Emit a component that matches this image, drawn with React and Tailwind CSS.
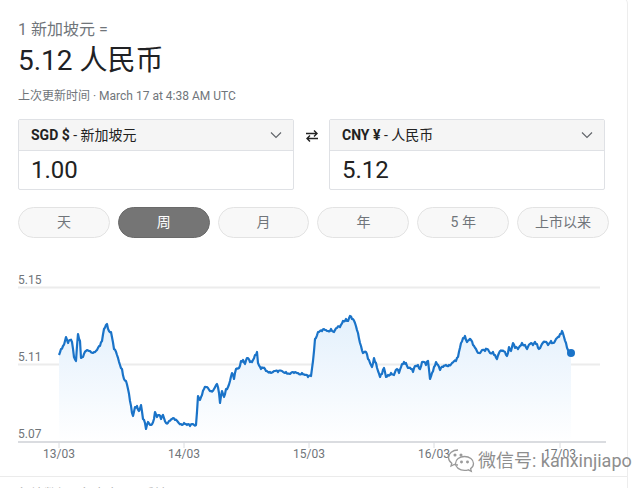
import React from 'react';

const FONT = { fontFamily: 'Roboto, "Noto Sans CJK SC", sans-serif' };

// rough trace of the rate line, page coordinates
const KEY = [
  [59, 354], [61, 348], [63, 345], [65, 340], [66, 336], [68, 342], [70, 339], [72, 341],
  [74, 356], [76, 360], [77, 345], [78, 333], [80, 340], [81, 357], [83, 356], [86, 350],
  [90, 350], [94, 351], [97, 349], [100, 345], [102, 340], [104, 328], [106, 324], [107, 323],
  [109, 330], [111, 331], [114, 348], [117, 354], [120, 364], [122, 368], [124, 378],
  [126, 380], [128, 388], [130, 400], [132, 412], [133, 415], [135, 406], [137, 405],
  [139, 410], [141, 404], [143, 418], [145, 422], [146, 428], [148, 421], [151, 424],
  [154, 418], [155, 411], [157, 416], [159, 414], [161, 418], [163, 414], [166, 422],
  [169, 420], [172, 418], [175, 419], [178, 421], [181, 423], [184, 422], [187, 424],
  [190, 425], [193, 423], [196, 424], [198, 395], [200, 399], [202, 394], [204, 388],
  [206, 386], [208, 387], [211, 390], [214, 388], [217, 383], [219, 392], [220, 402],
  [222, 390], [224, 396], [226, 388], [228, 386], [230, 380], [232, 372], [234, 378],
  [236, 368], [239, 367], [241, 360], [243, 359], [245, 363], [247, 357], [250, 361],
  [252, 361], [255, 354], [257, 351], [258, 362], [261, 368], [263, 367], [266, 370],
  [270, 371], [274, 370], [278, 371], [282, 370], [286, 371], [290, 373], [294, 372],
  [298, 372], [302, 372], [305, 374], [308, 376], [311, 375], [313, 360], [315, 338],
  [318, 331], [322, 330], [325, 329], [328, 330], [331, 328], [334, 331], [337, 327],
  [340, 326], [343, 320], [346, 318], [348, 320], [350, 315], [352, 318], [355, 322],
  [358, 332], [361, 345], [363, 352], [366, 351], [368, 358], [370, 362], [372, 366],
  [374, 357], [376, 362], [378, 370], [380, 376], [382, 373], [384, 367], [386, 376],
  [388, 374], [391, 372], [394, 374], [397, 368], [399, 372], [402, 363], [404, 361],
  [406, 362], [408, 367], [411, 368], [413, 371], [415, 365], [418, 364], [420, 368],
  [422, 361], [424, 361], [426, 364], [428, 360], [430, 378], [432, 372], [434, 366],
  [436, 361], [438, 364], [440, 369], [443, 366], [446, 364], [449, 364], [452, 362],
  [456, 360], [458, 356], [461, 342], [463, 337], [465, 335], [467, 341], [469, 339],
  [471, 339], [473, 344], [476, 348], [479, 352], [482, 349], [485, 350], [487, 348],
  [490, 352], [493, 351], [495, 354], [497, 358], [499, 352], [502, 350], [505, 351],
  [507, 355], [509, 346], [511, 350], [513, 342], [515, 347], [518, 348], [520, 345],
  [522, 342], [525, 344], [527, 348], [530, 343], [533, 344], [535, 341], [537, 343],
  [539, 348], [542, 343], [545, 341], [548, 344], [551, 340], [553, 342], [556, 338],
  [559, 336], [561, 333], [562, 330], [564, 336], [566, 342], [568, 349], [571, 352],
];

function buildLine() {
  const pts = [];
  for (let i = 0; i < KEY.length - 1; i++) {
    const [x0, y0] = KEY[i];
    const [x1, y1] = KEY[i + 1];
    const steps = Math.max(1, Math.round((x1 - x0) / 1));
    for (let s = 0; s < steps; s++) {
      const t = s / steps;
      const x = x0 + (x1 - x0) * t;
      const j = s === 0 ? 0 : Math.sin(x * 12.9898) * 1.3;
      pts.push([x, y0 + (y1 - y0) * t + j]);
    }
  }
  pts.push(KEY[KEY.length - 1]);
  return pts;
}

const LINE = buildLine();
const LINE_D = LINE.map((p, i) => `${i ? 'L' : 'M'}${p[0].toFixed(1)} ${p[1].toFixed(1)}`).join(' ');
const AREA_D = `${LINE_D} L571 441 L59 441 Z`;

const RANGES = ['天', '周', '月', '年', '5 年', '上市以来'];
const X_LABELS = [['13/03', 59], ['14/03', 184], ['15/03', 309], ['16/03', 434], ['17/03', 560]];

function Chevron() {
  return (
    <svg width="14" height="14" viewBox="0 0 14 14" fill="none" stroke="#5f6368" strokeWidth="1.1">
      <path d="M2 4.5 L7 9.5 L12 4.5" />
    </svg>
  );
}

function CurrencyBox({ code, name, value }) {
  return (
    <div className="w-[276px] border border-[#dfe1e5] rounded-[2px]">
      <div className="h-[31px] bg-[#f5f5f5] border-b border-[#dfe1e5] flex items-center justify-between pl-[12px] pr-[10px]">
        <span className="text-[14px] text-[#222]">
          <span className="font-bold">{code}</span> - {name}
        </span>
        <Chevron />
      </div>
      <div className="h-[38px] flex items-center pl-[12px] text-[24px] text-[#222] leading-none">{value}</div>
    </div>
  );
}

function SwapIcon() {
  return (
    <svg width="14" height="14" viewBox="0 0 14 14" fill="none" stroke="#222" strokeWidth="1.4">
      <path d="M1 4.5 H12 M9 1.5 L12 4.5 L9 7.5" />
      <path d="M13 9.5 H2 M5 6.5 L2 9.5 L5 12.5" />
    </svg>
  );
}

function Chart() {
  return (
    <svg width="627" height="210" viewBox="0 265 627 210" className="block">
      <defs>
        <linearGradient id="fill" x1="0" y1="0" x2="0" y2="1">
          <stop offset="0" stopColor="#e3f0fc" />
          <stop offset="1" stopColor="#ffffff" />
        </linearGradient>
      </defs>
      <line x1="18" y1="286.5" x2="600" y2="286.5" stroke="#ececec" strokeWidth="2" />
      <line x1="18" y1="363.5" x2="600" y2="363.5" stroke="#ececec" strokeWidth="2" />
      <text x="18" y="283" fontSize="12" fill="#70757a" fontFamily="Roboto, sans-serif">5.15</text>
      <text x="18" y="360" fontSize="12" fill="#70757a" fontFamily="Roboto, sans-serif">5.11</text>
      <text x="18" y="437" fontSize="12" fill="#70757a" fontFamily="Roboto, sans-serif">5.07</text>
      <path d={AREA_D} fill="url(#fill)" />
      <line x1="18" y1="441" x2="606" y2="441" stroke="#dadce0" strokeWidth="2" />
      {X_LABELS.map(([l, x]) => (
        <g key={l}>
          <line x1={x} y1="441" x2={x} y2="447" stroke="#dadce0" strokeWidth="1" />
          <text x={x} y="457" fontSize="12" fill="#70757a" textAnchor="middle" fontFamily="Roboto, sans-serif">{l}</text>
        </g>
      ))}
      <path d={LINE_D} fill="none" stroke="#1a73c8" strokeWidth="2.2" strokeLinejoin="round" />
      <circle cx="571" cy="352" r="4" fill="#1a73c8" />
    </svg>
  );
}

function WeChat() {
  return (
    <svg width="28" height="26" viewBox="0 0 28 26" fill="none" stroke="#9a9a9a" strokeWidth="1.3">
      <path d="M11 2 C5.5 2 1.5 5.5 1.5 9.5 C1.5 12 2.8 13.8 4.8 15.2 L4 18 L7.3 16.4 C8.5 16.8 9.7 17 11 17" />
      <path d="M17.5 8.5 C22.5 8.5 26.5 11.6 26.5 15.5 C26.5 17.6 25.4 19.4 23.6 20.6 L24.3 23.3 L21.3 21.8 C20.1 22.2 18.8 22.4 17.5 22.4 C12.5 22.4 8.5 19.3 8.5 15.5 C8.5 11.6 12.5 8.5 17.5 8.5 Z" />
      <circle cx="8" cy="7" r="0.9" fill="#9a9a9a" />
      <circle cx="14" cy="7" r="0.9" fill="#9a9a9a" />
      <circle cx="14.5" cy="14" r="0.8" fill="#9a9a9a" />
      <circle cx="20.5" cy="14" r="0.8" fill="#9a9a9a" />
    </svg>
  );
}

export default function App() {
  return (
    <div className="relative w-[640px] h-[488px] overflow-hidden bg-white" style={FONT}>
      <div className="w-[628px] -mt-[4px] pt-[4px] h-[500px] border-r border-t border-[#ededed] rounded-tr-[8px]">
        <div className="pl-[18px]">
          <div className="pt-[17px] text-[16px] leading-6 text-[#70757a]">1 新加坡元 =</div>
          <div className="mt-[1px] text-[28px] leading-9 text-[#202124]">5.12 人民币</div>
          <div className="mt-[9px] text-[12px] leading-4 text-[#70757a]">上次更新时间 · March 17 at 4:38 AM UTC</div>

          <div className="mt-[15px] flex items-start">
            <CurrencyBox code="SGD $" name="新加坡元" value="1.00" />
            <div className="w-[35px] flex justify-center pt-[10px]">
              <SwapIcon />
            </div>
            <CurrencyBox code="CNY ¥" name="人民币" value="5.12" />
          </div>

          <div className="mt-[17px] w-[591px] flex gap-2">
            {RANGES.map(r => (
              <div
                key={r}
                className={`flex-1 h-[31px] rounded-full flex items-center justify-center text-[14px] border ${r === '周' ? 'bg-[#757575] border-[#6a6a6a] text-white' : 'bg-[#f8f8f8] border-[#e3e3e3] text-[#70757a]'}`}
              >
                {r}
              </div>
            ))}
          </div>
        </div>

        <div className="mt-[28px]">
          <Chart />
        </div>

        <div className="border-t border-[#ebebeb] pl-[18px] pt-[9px] text-[13px] leading-4 text-[#b0b0b0]">
          行情数据 · 免责声明 · 反馈
        </div>
      </div>

      <div className="absolute left-[447px] top-[447px] flex items-center gap-[3px] text-[18px] text-[#8e8e8e]" style={{ textShadow: '0 0 2px #fff' }}>
        <WeChat />
        <span>微信号: kanxinjiapo</span>
      </div>
    </div>
  );
}
